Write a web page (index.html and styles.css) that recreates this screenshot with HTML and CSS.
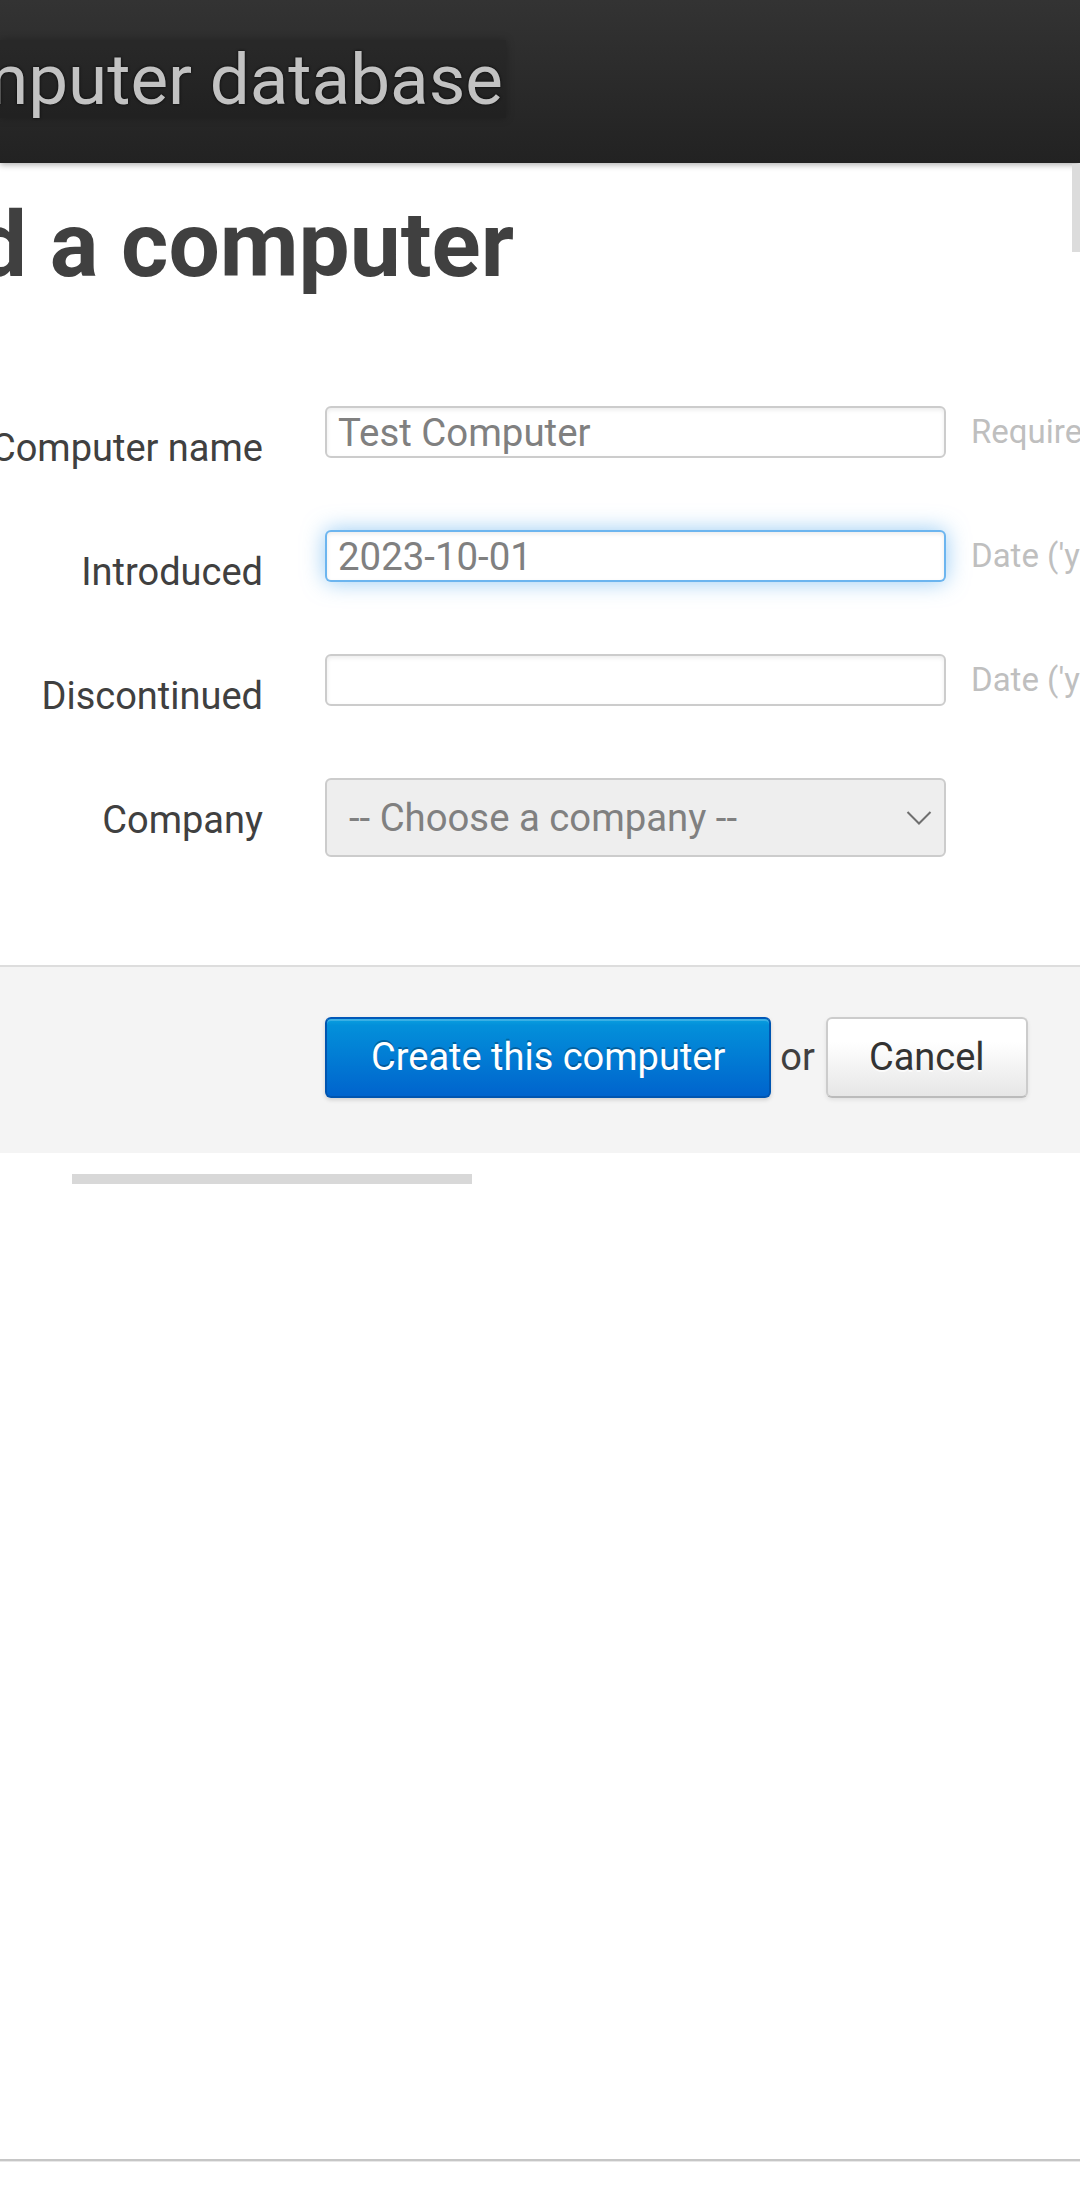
FILE: index.html
```html
<!DOCTYPE html>
<html lang="en">
<head>
<meta charset="utf-8">
<title>Add a computer</title>
<link rel="stylesheet" href="styles.css">
</head>
<body>
<header class="topbar">
  <div class="brand"><a class="brand-link" href="#">Computer database</a></div>
</header>
<div class="vscroll"></div>
<main class="content">
  <div class="title-wrap"><h1 class="page-title">Add a computer</h1></div>
  <form class="form">
    <div class="fields">
      <div class="row">
        <div class="label-col"><label class="label">Computer name</label></div>
        <input class="field" type="text" value="Test Computer">
        <span class="help">Required</span>
      </div>
      <div class="row">
        <div class="label-col"><label class="label">Introduced</label></div>
        <input class="field focused" type="text" value="2023-10-01">
        <span class="help">Date ('yyyy-MM-dd')</span>
      </div>
      <div class="row">
        <div class="label-col"><label class="label">Discontinued</label></div>
        <input class="field" type="text" value="">
        <span class="help">Date ('yyyy-MM-dd')</span>
      </div>
      <div class="row row-select">
        <div class="label-col"><label class="label">Company</label></div>
        <div class="select">
          <span class="select-text">-- Choose a company --</span>
          <svg class="chevron" width="26" height="16" viewBox="0 0 26 16"><path d="M1.5 2 L13 13.5 L24.5 2" fill="none" stroke="#6f6f6f" stroke-width="2"/></svg>
        </div>
      </div>
    </div>
    <div class="actions">
      <button class="btn btn-primary" type="button">Create this computer</button>
      <span class="or">or</span>
      <a class="btn btn-default" href="#">Cancel</a>
    </div>
  </form>
  <div class="hscroll"></div>
  <div class="bottom-line"></div>
</main>
</body>
</html>
```
FILE: styles.css
```css
html, body {
  margin: 0;
  padding: 0;
}
body {
  width: 1080px;
  height: 2194px;
  overflow: hidden;
  background: #fff;
  font-family: Roboto, "Noto Sans", "Liberation Sans", sans-serif;
  color: #404040;
  position: relative;
}
.topbar {
  height: 163px;
  box-sizing: border-box;
  padding-top: 40px;
  background: linear-gradient(#333333, #222222);
  box-shadow: 0 2px 6px rgba(0, 0, 0, 0.3);
  display: flex;
  position: relative;
  z-index: 1;
}
.brand {
  width: 506px;
  height: 78px;
  display: flex;
  justify-content: flex-end;
  background: rgba(0, 0, 0, 0.13);
  box-shadow: 0 0 8px rgba(0, 0, 0, 0.25);
  padding-right: 3px;
  box-sizing: border-box;
}
.brand-link {
  flex-shrink: 0;
  white-space: nowrap;
  font-size: 71px;
  line-height: 78px;
  padding-top: 1px;
  color: #c2c2c2;
  text-decoration: none;
  text-shadow: 0 0 3px rgba(0, 0, 0, 0.9);
}
.vscroll {
  position: absolute;
  top: 164px;
  right: 0;
  width: 8px;
  height: 88px;
  background: #dcdcdc;
  z-index: 2;
}
.title-wrap {
  width: 514px;
  margin-top: 32px;
  display: flex;
  justify-content: flex-end;
}
.page-title {
  margin: 0;
  flex-shrink: 0;
  white-space: nowrap;
  font-size: 91px;
  line-height: 100px;
  font-weight: 700;
  color: #404040;
}
.form {
  margin: 111px 0 0;
}
.fields {
  display: flex;
  flex-direction: column;
  gap: 72px;
}
.row {
  display: flex;
  align-items: flex-start;
  height: 52px;
}
.row-select {
  height: 79px;
}
.label-col {
  width: 263px;
  margin-right: 62px;
  flex-shrink: 0;
  display: flex;
  justify-content: flex-end;
}
.label {
  flex-shrink: 0;
  white-space: nowrap;
  font-size: 38px;
  line-height: 52px;
  padding-top: 16px;
  color: #404040;
}
.field {
  flex-shrink: 0;
  width: 621px;
  height: 52px;
  box-sizing: border-box;
  margin: 0;
  padding: 0 11px;
  border: 2px solid #cccccc;
  border-radius: 6px;
  background: #fff;
  box-shadow: inset 0 2px 4px rgba(0, 0, 0, 0.08);
  font-family: Roboto, "Noto Sans", sans-serif;
  font-size: 38.4px;
  color: #808080;
  outline: none;
}
.field.focused {
  border-color: rgba(82, 168, 236, 0.85);
  box-shadow: inset 0 2px 4px rgba(0, 0, 0, 0.08), 0 0 22px rgba(82, 168, 236, 0.6);
}
.help {
  flex-shrink: 0;
  white-space: nowrap;
  margin-left: 25px;
  font-size: 33px;
  line-height: 52px;
  color: #bfbfbf;
}
.select {
  flex-shrink: 0;
  width: 621px;
  height: 79px;
  box-sizing: border-box;
  border: 2px solid #cccccc;
  border-radius: 6px;
  background: #eeeeee;
  display: flex;
  align-items: center;
  justify-content: space-between;
  padding: 0 12px 0 22px;
}
.select-text {
  font-size: 38.3px;
  color: #808080;
  white-space: nowrap;
}
.chevron {
  display: block;
}
.actions {
  margin-top: 108px;
  height: 188px;
  box-sizing: border-box;
  border-top: 2px solid #dddddd;
  background: #f4f4f4;
  padding: 50px 0 0 325px;
  display: flex;
  align-items: flex-start;
}
.btn {
  height: 81px;
  box-sizing: border-box;
  border-radius: 6px;
  font-family: Roboto, "Noto Sans", sans-serif;
  font-size: 38px;
  line-height: 77px;
  padding: 0 41px;
  margin: 0;
  display: inline-block;
  text-decoration: none;
  white-space: nowrap;
  cursor: pointer;
}
.btn-primary {
  padding: 0 44px;
  color: #fff;
  border: 2px solid #0055b0;
  border-top-color: #0058b8;
  background: linear-gradient(#0aa0e0 0%, #0390da 8%, #0064cd 100%);
  text-shadow: 0 -2px 0 rgba(0, 0, 0, 0.25);
  box-shadow: inset 0 2px 0 rgba(255, 255, 255, 0.2), 0 2px 4px rgba(0, 0, 0, 0.15);
}
.or {
  font-size: 38px;
  line-height: 81px;
  color: #404040;
  margin: 0 11px 0 9px;
}
.btn-default {
  color: #333;
  border: 2px solid #cccccc;
  border-bottom-color: #bbbbbb;
  background: linear-gradient(#ffffff 0%, #ffffff 30%, #e6e6e6 100%);
  text-shadow: 0 2px 0 rgba(255, 255, 255, 0.75);
  box-shadow: inset 0 2px 0 rgba(255, 255, 255, 0.2), 0 2px 4px rgba(0, 0, 0, 0.08);
}
.hscroll {
  margin: 21px 0 0 72px;
  width: 400px;
  height: 10px;
  background: #d8d8d8;
}
.bottom-line {
  margin-top: 975px;
  height: 2px;
  background: #c6c6c6;
  border-bottom: 1px solid #e8e8e8;
}
```
